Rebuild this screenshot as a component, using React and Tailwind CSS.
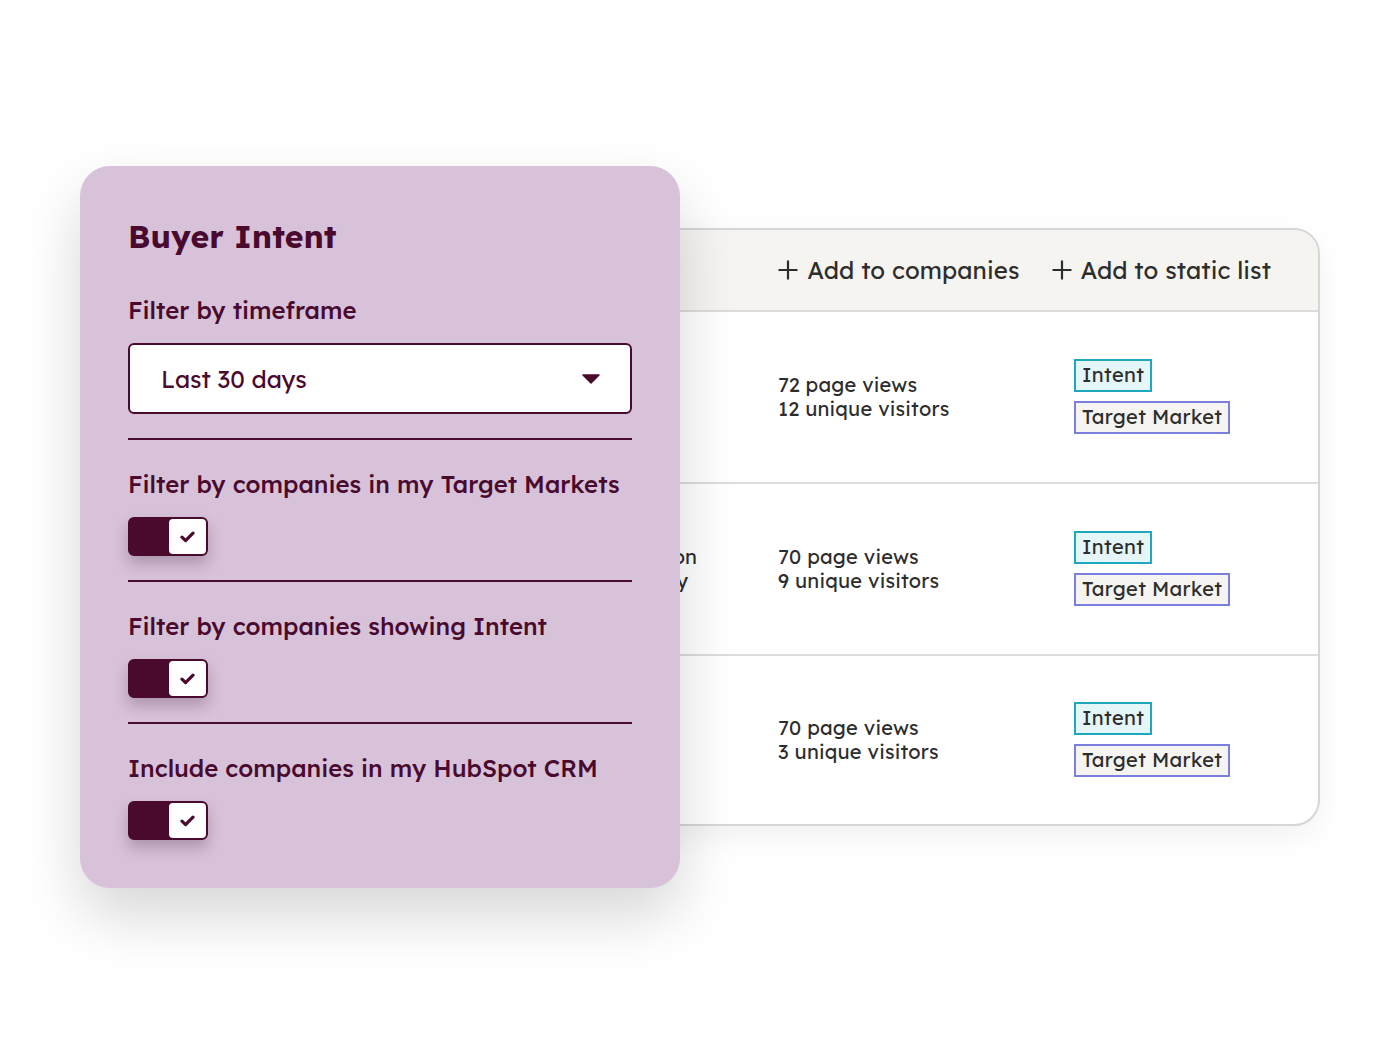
import React from "react";

const FONT = { fontFamily: '"Lexend Deca", Inter, "Noto Sans", sans-serif' };

function Plus() {
  return (
    <svg width="20" height="20" viewBox="0 0 20 20" className="shrink-0">
      <path d="M10 0.5v19M0.5 10h19" stroke="#2d2d2d" strokeWidth="2.2" />
    </svg>
  );
}

function Toggle() {
  return (
    <div className="w-[80px] h-[39px] rounded-[6px] bg-[#4a0a2e] border-2 border-[#4a0a2e] flex justify-end shadow-[0_8px_14px_rgba(60,20,50,0.25)]">
      <div className="w-[37px] h-full bg-white rounded-[4px] flex items-center justify-center">
        <svg width="15" height="12" viewBox="0 0 15 12">
          <path d="M2 6.2l3.6 3.4L13 2.2" fill="none" stroke="#4a0a2e" strokeWidth="3.2" strokeLinecap="round" strokeLinejoin="round" />
        </svg>
      </div>
    </div>
  );
}

function Section({ label }) {
  return (
    <div className="border-t-2 border-[#4a0a2e] pt-[29px] pb-[24px]">
      <div className="text-[24px] leading-[30px] font-medium">{label}</div>
      <div className="mt-[18px]">
        <Toggle />
      </div>
    </div>
  );
}

function Row({ views, visitors, hidden, last }) {
  return (
    <div className={`flex items-center ${last ? "h-[168px]" : "h-[172px] border-b-2 border-[#dcdcdc]"}`}>
      <div className="w-[176px] shrink-0 pr-[81px] text-right text-[20px] leading-[24px] text-[#2d2d2d] whitespace-nowrap flex flex-col items-end">
        {hidden ? (
          <>
            <div>Acme Corporation</div>
            <div className="mr-[9px]">Company</div>
          </>
        ) : null}
      </div>
      <div className="w-[296px] shrink-0 text-[20px] leading-[24px] text-[#2d2d2d] tracking-[0.2px]">
        <div>{views}</div>
        <div>{visitors}</div>
      </div>
      <div className="flex flex-col items-start gap-[9px] -mt-[2px]">
        <span className="h-[33px] px-[6px] flex items-center border-2 border-[#1ea8bd] bg-[#e5f6f9] text-[20px] text-[#2d2d2d] tracking-[0.3px]">
          Intent
        </span>
        <span className="h-[33px] px-[6px] flex items-center border-2 border-[#7a7fdd] bg-[#f5f4f0] text-[20px] text-[#2d2d2d] tracking-[0.3px]">
          Target Market
        </span>
      </div>
    </div>
  );
}

export default function App() {
  return (
    <div className="w-[1400px] h-[1051px] bg-white relative overflow-hidden" style={FONT}>
      <div className="pt-[228px] pl-[600px]">
        <div className="w-[720px] rounded-[26px] border-2 border-[#d6d6d6] overflow-hidden bg-white shadow-[0_10px_30px_rgba(0,0,0,0.06)]">
          <div className="h-[82px] bg-[#f5f4f0] border-b-2 border-[#dcdcdc] flex items-center justify-end pr-[47px] gap-[32px] text-[24px] text-[#2d2d2d] tracking-[0.1px]">
            <div className="flex items-center gap-[9px]">
              <Plus />
              <span>Add to companies</span>
            </div>
            <div className="flex items-center gap-[9px]">
              <Plus />
              <span>Add to static list</span>
            </div>
          </div>
          <Row views="72 page views" visitors="12 unique visitors" />
          <Row views="70 page views" visitors="9 unique visitors" hidden />
          <Row views="70 page views" visitors="3 unique visitors" last />
        </div>
      </div>

      <div className="absolute left-[80px] top-[166px] w-[600px] h-[722px] rounded-[30px] bg-[#d7c2d9] text-[#4a0a2e] px-[48px] pt-[50px] shadow-[0_28px_60px_rgba(0,0,0,0.16)]">
        <div className="text-[32px] leading-[40px] font-bold">Buyer Intent</div>
        <div className="mt-[39px] text-[24px] leading-[30px] font-medium">Filter by timeframe</div>
        <div className="mt-[18px] h-[71px] bg-white border-2 border-[#4a0a2e] rounded-[6px] flex items-center justify-between pl-[31px] pr-[30px]">
          <span className="text-[24px]">Last 30 days</span>
          <svg width="18" height="10" viewBox="0 0 18 10">
            <path d="M1 1h16l-8 8z" fill="#4a0a2e" stroke="#4a0a2e" strokeWidth="1.5" strokeLinejoin="round" />
          </svg>
        </div>
        <div className="mt-[24px]">
          <Section label="Filter by companies in my Target Markets" />
          <Section label="Filter by companies showing Intent" />
          <Section label="Include companies in my HubSpot CRM" />
        </div>
      </div>
    </div>
  );
}
